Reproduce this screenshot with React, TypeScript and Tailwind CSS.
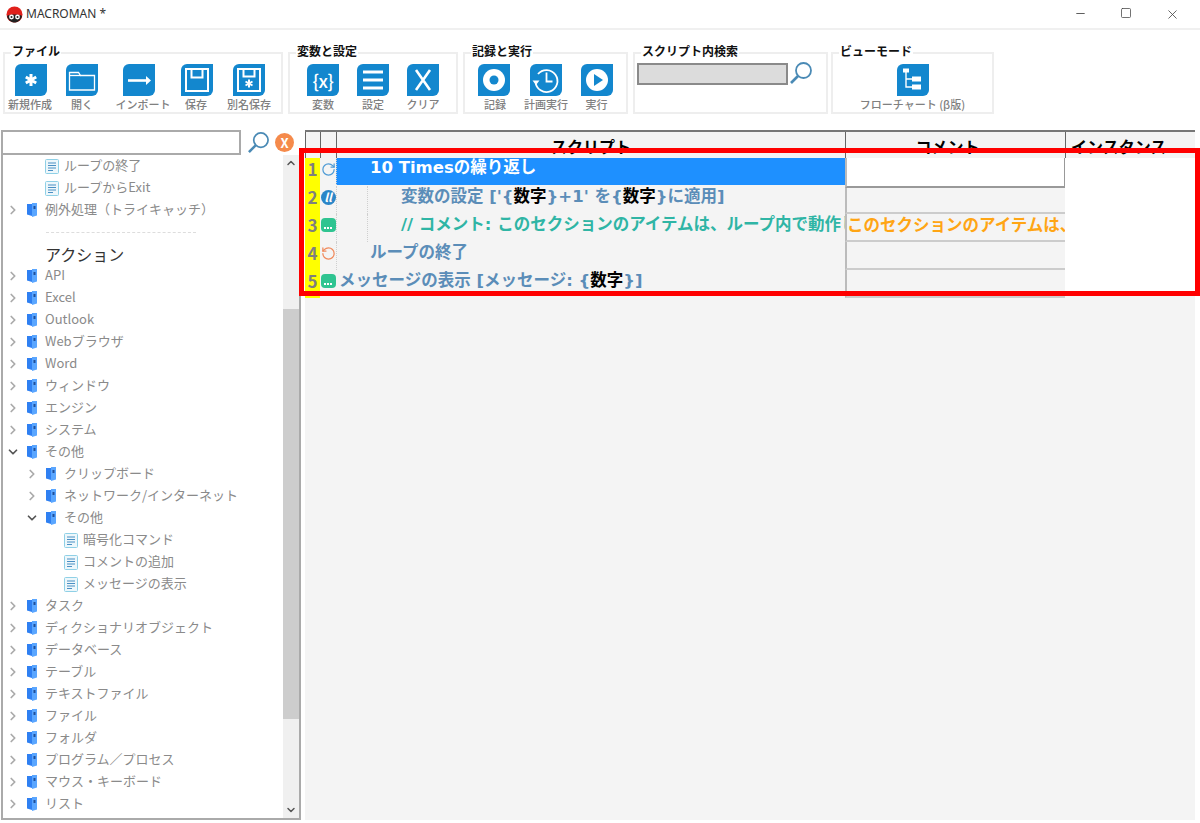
import React from 'react';
import { ChevronDown, ChevronRight, ChevronUp, Minus, RotateCcw, RotateCw, Square, X } from 'lucide-react';

const Tile = ({ children, className = '' }: { children: React.ReactNode; className?: string }) => (
    <div className={`w-8 h-8 bg-[#1387ce] rounded-tl-[6px] rounded-br-[6px] flex items-center justify-center text-white shrink-0 ${className}`}>
        {children}
    </div>
);

const Glyph = ({ children }: { children: React.ReactNode }) => (
    <svg width="32" height="32" viewBox="0 0 32 32" fill="none" stroke="white" strokeWidth="2">
        {children}
    </svg>
);

const icons: Record<string, React.ReactNode> = {
    new: (
        <Glyph>
            <path d="M16 10v12M10.8 13l10.4 6M21.2 13l-10.4 6" strokeWidth="3" />
        </Glyph>
    ),
    open: (
        <Glyph>
            <path d="M3.5 26V8.5h9l2 3h14V26z" strokeWidth="1.3" />
            <path d="M3.5 11.5h11" strokeWidth="1.3" />
        </Glyph>
    ),
    import: (
        <Glyph>
            <path d="M5 16.5h20" strokeWidth="2.6" />
            <path d="M23 12l5 4.5-5 4.5z" fill="white" stroke="none" />
        </Glyph>
    ),
    save: (
        <Glyph>
            <path d="M5 5h22v22H5z" />
            <path d="M10.5 5v8.5h11V5" />
        </Glyph>
    ),
    saveAs: (
        <Glyph>
            <path d="M5 5h22v22H5z" />
            <path d="M10.5 5v7.5h11V5" />
            <path d="M16 15.5v8M12.5 17.5l7 4M19.5 17.5l-7 4" />
        </Glyph>
    ),
    vars: <span className="text-[18px] font-medium leading-none tracking-[-0.5px]">{'{x}'}</span>,
    settings: (
        <Glyph>
            <path d="M6 8h20M6 16h20M6 24h20" strokeWidth="3" />
        </Glyph>
    ),
    clear: (
        <Glyph>
            <path d="M9 6l14 20M23 6L9 26" strokeWidth="2.6" />
        </Glyph>
    ),
    record: (
        <Glyph>
            <circle cx="16" cy="16" r="11" fill="white" stroke="none" />
            <circle cx="16" cy="16" r="4.5" fill="#1387ce" stroke="none" />
        </Glyph>
    ),
    schedule: (
        <Glyph>
            <path d="M8 10a11 11 0 1 1-2.5 8" strokeWidth="1.8" />
            <path d="M2.5 16.5h7L6 21z" fill="white" stroke="none" />
            <path d="M16.5 8.5v9h6" strokeWidth="1.8" />
        </Glyph>
    ),
    play: (
        <Glyph>
            <circle cx="16" cy="16" r="11" fill="white" stroke="none" />
            <path d="M13 10l9 6-9 6z" fill="#1387ce" stroke="none" />
        </Glyph>
    ),
    flow: (
        <Glyph>
            <path d="M6 4.5h6v4H6z" fill="white" stroke="none" />
            <path d="M9 8v15h6M9 15h6" strokeWidth="1.4" />
            <path d="M15 12.5h9v5h-9zM15 20.5h9v5h-9z" fill="white" stroke="none" />
        </Glyph>
    ),
};

const ToolButton = ({ icon, label, width, iconClass }: { icon: string; label: string; width: string; iconClass?: string }) => (
    <div className={`${width} flex flex-col items-center shrink-0`}>
        <Tile className={iconClass}>{icons[icon]}</Tile>
        <span className="mt-px text-[11px] leading-[14px] font-medium text-[#808080] whitespace-nowrap">{label}</span>
    </div>
);

const Group = ({ title, width, children }: { title: string; width: string; children: React.ReactNode }) => (
    <div className={`${width} h-[62px] border-2 border-[#eeeeee] shrink-0`}>
        <div className="-mt-[10px] ml-[6px] w-fit bg-white px-[1px] text-[12px] leading-[14px] font-bold text-[#111]">{title}</div>
        <div className="mt-[6px] flex">{children}</div>
    </div>
);

const Magnifier = ({ size }: { size: number }) => (
    <svg width={size} height={size} viewBox="0 0 24 24" fill="none" stroke="#4a8ab5">
        <circle cx="14.5" cy="9.5" r="7.5" strokeWidth="1.8" />
        <path d="M9 15l-7 7" strokeWidth="2.6" />
    </svg>
);

const FolderIcon = () => (
    <svg width="10" height="14" viewBox="0 0 10 14" className="shrink-0">
        <path d="M0 1h5v12l-5-1.5z" fill="#2f80f2" />
        <path d="M5 0h5v12.5L5 14z" fill="#5aa6ff" />
        <path d="M6.5 3h2v3h-2z" fill="#1f4f9a" />
    </svg>
);

const FileIcon = () => (
    <svg width="14" height="15" viewBox="0 0 14 15" className="shrink-0">
        <rect x="0.5" y="0.5" width="13" height="14" rx="1" fill="#edf7fb" stroke="#8fd0e6" />
        <path d="M3 4h8M3 6.5h8M3 9h8M3 11.5h5" stroke="#4a8fc4" strokeWidth="1.1" />
    </svg>
);

type TreeRow =
    | { kind: 'folder'; label: string; level: 0 | 1; open?: boolean }
    | { kind: 'file'; label: string; level: 0 | 1 }
    | { kind: 'separator' }
    | { kind: 'heading'; label: string };

const treeRows: TreeRow[] = [
    { kind: 'file', label: 'ループの終了', level: 0 },
    { kind: 'file', label: 'ループからExit', level: 0 },
    { kind: 'folder', label: '例外処理（トライキャッチ）', level: 0 },
    { kind: 'separator' },
    { kind: 'heading', label: 'アクション' },
    { kind: 'folder', label: 'API', level: 0 },
    { kind: 'folder', label: 'Excel', level: 0 },
    { kind: 'folder', label: 'Outlook', level: 0 },
    { kind: 'folder', label: 'Webブラウザ', level: 0 },
    { kind: 'folder', label: 'Word', level: 0 },
    { kind: 'folder', label: 'ウィンドウ', level: 0 },
    { kind: 'folder', label: 'エンジン', level: 0 },
    { kind: 'folder', label: 'システム', level: 0 },
    { kind: 'folder', label: 'その他', level: 0, open: true },
    { kind: 'folder', label: 'クリップボード', level: 1 },
    { kind: 'folder', label: 'ネットワーク/インターネット', level: 1 },
    { kind: 'folder', label: 'その他', level: 1, open: true },
    { kind: 'file', label: '暗号化コマンド', level: 1 },
    { kind: 'file', label: 'コメントの追加', level: 1 },
    { kind: 'file', label: 'メッセージの表示', level: 1 },
    { kind: 'folder', label: 'タスク', level: 0 },
    { kind: 'folder', label: 'ディクショナリオブジェクト', level: 0 },
    { kind: 'folder', label: 'データベース', level: 0 },
    { kind: 'folder', label: 'テーブル', level: 0 },
    { kind: 'folder', label: 'テキストファイル', level: 0 },
    { kind: 'folder', label: 'ファイル', level: 0 },
    { kind: 'folder', label: 'フォルダ', level: 0 },
    { kind: 'folder', label: 'プログラム／プロセス', level: 0 },
    { kind: 'folder', label: 'マウス・キーボード', level: 0 },
    { kind: 'folder', label: 'リスト', level: 0 },
];

const Tree = () => (
    <div className="flex-1 min-w-0 overflow-hidden">
        {treeRows.map((row, i) => {
            if (row.kind === 'separator') {
                return (
                    <div key={i} className="h-[22px] flex items-center pl-[43px]">
                        <div className="w-[150px] border-t border-dashed border-[#dddddd]" />
                    </div>
                );
            }
            if (row.kind === 'heading') {
                return (
                    <div key={i} className="h-[22px] flex items-center pl-[42px] text-[16px] text-[#333333] whitespace-nowrap">
                        {row.label}
                    </div>
                );
            }
            if (row.kind === 'file') {
                return (
                    <div key={i} className={`h-[22px] flex items-center gap-[5px] ${row.level === 0 ? 'pl-[42px]' : 'pl-[61px]'} text-[13px] text-[#8a8a8a] whitespace-nowrap`}>
                        <FileIcon />
                        <span className="-mt-[2px]">{row.label}</span>
                    </div>
                );
            }
            return (
                <div key={i} className={`h-[22px] flex items-center ${row.level === 0 ? 'pl-[3px]' : 'pl-[22px]'} text-[13px] text-[#8a8a8a] whitespace-nowrap`}>
                    {row.open ? (
                        <ChevronDown size={14} strokeWidth={3} className="text-[#555555] shrink-0" />
                    ) : (
                        <ChevronRight size={14} strokeWidth={3} className="text-[#aaaaaa] shrink-0" />
                    )}
                    <span className="ml-[7px]"><FolderIcon /></span>
                    <span className="ml-[8px] -mt-[2px]">{row.label}</span>
                </div>
            );
        })}
    </div>
);

const SpeechIcon = () => (
    <div className="w-[15px] h-[14px] rounded-[4px] bg-[#2fc491] flex items-end justify-center pb-[3px] gap-px">
        <span className="w-[2px] h-[2px] bg-white" />
        <span className="w-[2px] h-[2px] bg-white" />
        <span className="w-[2px] h-[2px] bg-white" />
    </div>
);

const InfoIcon = () => (
    <div className="w-[15px] h-[15px] rounded-full bg-[#2a86c8] flex items-center justify-center text-white text-[12px] font-bold italic leading-none">
        ll
    </div>
);

const Var = ({ name }: { name: string }) => (
    <>
        {'{'}
        <span className="text-black">{name}</span>
        {'}'}
    </>
);

const rows: { guides: number; icon: React.ReactNode; text: React.ReactNode; tone: string; comment?: string }[] = [
    {
        guides: 1,
        icon: <RotateCw size={15} strokeWidth={2} className="text-[#4f9bd5]" />,
        text: '10 Timesの繰り返し',
        tone: 'text-white',
    },
    {
        guides: 2,
        icon: <InfoIcon />,
        text: (
            <>
                変数の設定 ['<Var name="数字" />+1' を<Var name="数字" />に適用]
            </>
        ),
        tone: 'text-[#5b8db8]',
    },
    {
        guides: 2,
        icon: <SpeechIcon />,
        text: '// コメント: このセクションのアイテムは、ループ内で動作します',
        tone: 'text-[#2fb5a5]',
        comment: 'このセクションのアイテムは、ループ内で動作します',
    },
    {
        guides: 1,
        icon: <RotateCcw size={15} strokeWidth={2} className="text-[#f08a5d]" />,
        text: 'ループの終了',
        tone: 'text-[#5b8db8]',
    },
    {
        guides: 0,
        icon: <SpeechIcon />,
        text: (
            <>
                メッセージの表示 [メッセージ: <Var name="数字" />]
            </>
        ),
        tone: 'text-[#5b8db8]',
    },
];

const ScriptGrid = () => (
    <div className="w-[890px] h-[690px] bg-[#f4f4f4] overflow-hidden">
        <div className="h-[28px] flex border-t-2 border-[#777777] text-[16px] font-bold text-black">
            <div className="w-[15px] border-l border-[#666666]" />
            <div className="w-[16px] border-l border-[#666666]" />
            <div className="w-[509px] border-l border-[#666666] text-center pt-[2px]">スクリプト</div>
            <div className="w-[220px] border-l border-[#666666] text-center pt-[2px] pr-[16px]">コメント</div>
            <div className="w-[130px] border-l border-[#666666] pl-[5px] pt-[2px] whitespace-nowrap">インスタンス</div>
        </div>
        {rows.map((row, i) => (
            <div key={i} className="h-[28px] flex">
                <div className="w-[15px] bg-[#ffff00] text-[17px] font-bold text-[#7f7f7f] text-center pb-[6px] flex items-center justify-center">
                    {i + 1}
                </div>
                <div className="w-[16px] pb-[6px] flex items-center justify-center shrink-0">{row.icon}</div>
                <div className={`w-[509px] shrink-0 flex overflow-hidden ${i === 0 ? 'h-[27px] bg-[#1e90ff]' : ''}`}>
                    {Array.from({ length: row.guides }).map((_, g) => (
                        <div key={g} className="w-[31px] shrink-0 border-l border-dotted border-[#cfcfcf]" />
                    ))}
                    <div className={`pl-[3px] pb-[6px] flex items-center text-[16.5px] font-bold whitespace-nowrap font-['DejaVu_Sans','Noto_Sans_CJK_JP',sans-serif] ${row.tone}`}>
                        {row.text}
                    </div>
                </div>
                <div
                    className={`w-[220px] shrink-0 overflow-hidden border-l-2 border-[#bbbbbb] ${
                        i === 0 ? 'h-[30px] bg-white border-r border-b-2 border-r-[#999999] border-b-[#999999] relative z-10' : 'border-b-2 border-b-[#cccccc]'
                    }`}
                >
                    {row.comment && (
                        <div className="h-full pb-[6px] flex items-center text-[16.5px] font-bold text-[#ffa514] whitespace-nowrap">{row.comment}</div>
                    )}
                </div>
                <div className={`w-[130px] shrink-0 bg-white ${i === 4 ? 'h-[24px]' : ''}`} />
            </div>
        ))}
    </div>
);

export default function App() {
    return (
        <div className="relative w-[1200px] h-[823px] bg-white overflow-hidden font-['Noto_Sans_CJK_JP','Noto_Sans',sans-serif]">
            {/* title bar */}
            <div className="h-[30px] flex items-center border-b-2 border-[#f0f0f0]">
                <svg width="17" height="17" viewBox="0 0 17 17" className="ml-[6px]">
                    <circle cx="8.5" cy="8.5" r="8" fill="#e0201b" />
                    <path d="M1 10c2-2 13-2 15 0-1 4-4 6.5-7.5 6.5S2 14 1 10z" fill="#222222" />
                    <circle cx="5.5" cy="11" r="2.4" fill="white" />
                    <circle cx="11.5" cy="11" r="2.4" fill="white" />
                    <circle cx="5.5" cy="11" r="1" fill="#222222" />
                    <circle cx="11.5" cy="11" r="1" fill="#222222" />
                </svg>
                <span className="ml-[3px] text-[12px] text-[#333333] font-['Noto_Sans',sans-serif]">MACROMAN *</span>
                <div className="ml-auto pr-[5px] flex text-[#444444]">
                    <div className="w-[46px] flex justify-center"><Minus size={13} strokeWidth={1.6} /></div>
                    <div className="w-[46px] flex justify-center"><Square size={12} strokeWidth={1.5} /></div>
                    <div className="w-[46px] flex justify-center"><X size={15} strokeWidth={1.3} /></div>
                </div>
            </div>

            {/* ribbon */}
            <div className="h-[100px] pt-[22px] pl-[3px] flex gap-[5px]">
                <Group title="ファイル" width="w-[280px]">
                    <ToolButton icon="new" label="新規作成" width="w-[50px]" iconClass="ml-[2px]" />
                    <ToolButton icon="open" label="開く" width="w-[54px]" />
                    <ToolButton icon="import" label="インポート" width="w-[68px]" iconClass="mr-[8px]" />
                    <ToolButton icon="save" label="保存" width="w-[38px]" iconClass="ml-[2px]" />
                    <ToolButton icon="saveAs" label="別名保存" width="w-[68px]" />
                </Group>
                <Group title="変数と設定" width="w-[170px]">
                    <ToolButton icon="vars" label="変数" width="w-[66px]" />
                    <ToolButton icon="settings" label="設定" width="w-[34px]" />
                    <ToolButton icon="clear" label="クリア" width="w-[66px]" />
                </Group>
                <Group title="記録と実行" width="w-[165px]">
                    <ToolButton icon="record" label="記録" width="w-[60px]" iconClass="mr-[2px]" />
                    <ToolButton icon="schedule" label="計画実行" width="w-[42px]" />
                    <ToolButton icon="play" label="実行" width="w-[59px]" />
                </Group>
                <Group title="スクリプト内検索" width="w-[195px]">
                    <div className="-mt-[1px] ml-[2px] flex">
                        <div className="w-[151px] h-[22px] bg-[#dcdcdc] border-2 border-[#8a8a8a]" />
                        <div className="ml-[1px] -mt-[2px]"><Magnifier size={24} /></div>
                    </div>
                </Group>
                <div className="-ml-[2px]">
                    <Group title="ビューモード" width="w-[163px]">
                        <ToolButton icon="flow" label="フローチャート (β版)" width="w-[159px]" />
                    </Group>
                </div>
            </div>

            {/* main */}
            <div className="flex">
                <div className="w-[305px] shrink-0 pl-[1px]">
                    <div className="h-[25px] flex items-center">
                        <div className="w-[240px] h-[25px] bg-white border-2 border-[#aaaaaa]" />
                        <div className="ml-[6px]"><Magnifier size={23} /></div>
                        <div className="ml-[5px] w-[19px] h-[19px] rounded-full bg-[#f58a4b] text-white text-[13px] font-bold leading-none flex items-center justify-center">X</div>
                    </div>
                    <div className="w-[300px] h-[665px] flex border-2 border-t-0 border-[#aaaaaa]">
                        <Tree />
                        <div className="w-[16px] shrink-0 bg-[#f0f0f0] flex flex-col text-[#555555]">
                            <div className="h-[16px] flex items-center justify-center"><ChevronUp size={12} strokeWidth={3} /></div>
                            <div className="h-[138px]" />
                            <div className="h-[410px] bg-[#cdcdcd]" />
                            <div className="flex-1" />
                            <div className="h-[16px] flex items-center justify-center"><ChevronDown size={12} strokeWidth={3} /></div>
                        </div>
                    </div>
                </div>
                <ScriptGrid />
            </div>

            {/* red annotation frame */}
            <div className="absolute left-[299px] top-[148px] w-[901px] h-[148px] border-[5px] border-[#ff0000] pointer-events-none z-20" />
        </div>
    );
}
